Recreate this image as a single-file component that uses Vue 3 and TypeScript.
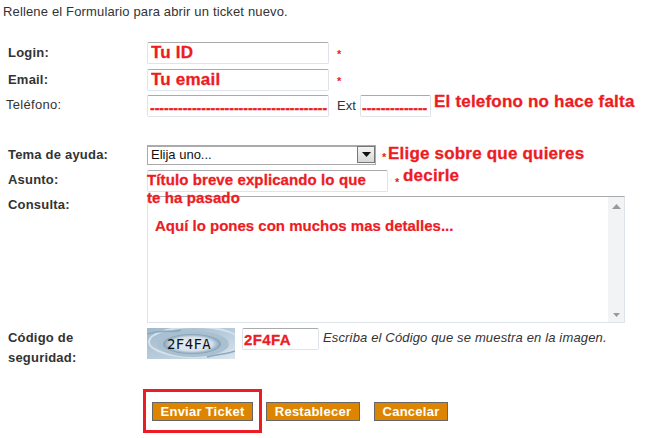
<script setup lang="ts">
const logins = [
  { label: 'Login:', value: 'Tu ID' },
  { label: 'Email:', value: 'Tu email' },
]
</script>

<template>
  <main class="page">
    <p class="intro">Rellene el Formulario para abrir un ticket nuevo.</p>

    <form class="form" @submit.prevent>
      <div v-for="row in logins" :key="row.label" class="row row-contact">
        <label class="label label-contact">{{ row.label }}</label>
        <input class="field field-main" :value="row.value" readonly />
        <span class="req req-far">*</span>
      </div>

      <div class="row row-phone">
        <label class="label label-plain">Teléfono:</label>
        <input class="field field-main field-dash" value="--------------------------------------" readonly />
        <span class="ext">Ext</span>
        <input class="field field-ext field-dash" value="--------------" readonly />
        <span class="note note-phone">El telefono no hace falta</span>
      </div>

      <div class="row row-topic">
        <label class="label">Tema de ayuda:</label>
        <div class="select">
          <span class="select-text">Elija uno...</span>
          <span class="select-btn">
            <svg width="9" height="5" viewBox="0 0 9 5"><path d="M0 0h9L4.500 5z" fill="#111" /></svg>
          </span>
        </div>
        <span class="req req-topic">*</span>
        <span class="note note-topic">Elige sobre que quieres</span>
      </div>

      <div class="row row-subject">
        <label class="label">Asunto:</label>
        <div class="field field-subject"></div>
        <span class="req req-subject">*</span>
        <span class="note note-decirle">decirle</span>
        <span class="note note-subject">Título breve explicando lo que<br />te ha pasado</span>
      </div>

      <div class="row row-message">
        <label class="label label-message">Consulta:</label>
        <div class="message">
          <div class="message-text">Aquí lo pones con muchos mas detalles...</div>
          <div class="scroll">
            <svg width="9" height="5" viewBox="0 0 9 5"><path d="M4.500 0L9 5H0z" fill="#9a9a9a" /></svg>
            <svg width="7" height="4" viewBox="0 0 7 4"><path d="M0 0h7L3.500 4z" fill="#9a9a9a" /></svg>
          </div>
        </div>
      </div>

      <div class="row row-captcha">
        <label class="label label-wrap">Código de seguridad:</label>
        <div class="captcha">
          <svg class="captcha-bg" width="88" height="31" viewBox="0 0 88 31">
            <defs>
              <linearGradient id="capbg" x1="0" y1="0" x2="1" y2="1">
                <stop offset="0" stop-color="#9fb9cc" />
                <stop offset="0.55" stop-color="#b9cddc" />
                <stop offset="1" stop-color="#dbe6ee" />
              </linearGradient>
              <radialGradient id="caprip" cx="0.5" cy="0.5" r="0.5">
                <stop offset="0" stop-color="#eef3f7" />
                <stop offset="0.7" stop-color="#d4e0e9" />
                <stop offset="1" stop-color="#7f9db4" />
              </radialGradient>
            </defs>
            <rect width="88" height="31" fill="url(#capbg)" />
            <ellipse cx="48" cy="14" rx="46" ry="15" fill="none" stroke="#d6e2ea" stroke-width="2" />
            <ellipse cx="46" cy="16" rx="36" ry="13" fill="#a9c0d1" />
            <ellipse cx="45" cy="16" rx="29" ry="10" fill="url(#caprip)" />
            <path d="M0 6C18 0 26 6 34 2M60 29c10-3 18-2 28-6" fill="none" stroke="#8ba7bc" stroke-width="1.500" />
          </svg>
          <span class="captcha-code">2F4FA</span>
        </div>
        <input class="field field-captcha" value="2F4FA" readonly />
        <em class="hint">Escriba el Código que se muestra en la imagen.</em>
      </div>

      <div class="actions">
        <div class="highlight">
          <button class="btn btn-send" type="submit">Enviar Ticket</button>
        </div>
        <button class="btn btn-reset" type="reset">Restablecer</button>
        <button class="btn btn-cancel" type="button">Cancelar</button>
      </div>
    </form>
  </main>
</template>

<style>
html, body { background: #fff; }
</style>

<style scoped>
.page {
  width: 647px;
  height: 438px;
  overflow: hidden;
  background: #fff;
  color: #333;
  font-family: "Liberation Sans", Arial, sans-serif;
  font-size: 13px;
  box-sizing: border-box;
  padding: 5px 0 0 3px;
}
.intro {
  margin: 0;
  line-height: 14px;
  letter-spacing: 0.15px;
}
.form {
  display: flex;
  flex-direction: column;
  margin-top: 23px;
  padding-left: 5px;
}
.row {
  position: relative;
  display: flex;
  align-items: flex-start;
}
.row-contact { height: 27px; }
.row-contact + .row-contact { height: 26px; }
.row-phone { height: 50px; }
.row-topic { height: 25px; }
.row-subject { height: 26px; }
.row-message { height: 132px; }
.row-captcha { height: 61px; }

.label {
  flex: 0 0 139px;
  font-weight: bold;
  line-height: 14px;
  letter-spacing: 0.2px;
  color: #333;
  padding-top: 3px;
}
.label-contact { padding-top: 4px; }
.label-plain {
  font-weight: normal;
  margin-left: -2px;
  flex-basis: 141px;
  letter-spacing: 0.3px;
  padding-top: 3px;
}
.label-message { padding-top: 2px; }
.label-wrap {
  line-height: 20px;
  padding-top: 0;
}
.row-captcha .label-wrap { width: 80px; flex: 0 0 80px; margin-right: 59px; }

.field {
  box-sizing: border-box;
  height: 22px;
  padding: 0 0 0 3px;
  border: 1px solid #dfe3ea;
  border-top-color: #aaa;
  border-radius: 2px;
  outline: none;
  background: #fff;
  color: #ed1c24;
  font-family: "Liberation Sans", Arial, sans-serif;
  font-weight: bold;
  font-size: 17px;
  letter-spacing: 0.2px;
  -webkit-text-stroke: 0.3px #ed1c24;
}
.field-main { width: 182px; }
.field-dash { font-size: 14px; letter-spacing: 0; padding: 4px 0 0 2px; }
.field-ext { width: 71px; padding-left: 1px; }
.field-subject { width: 241px; }
.field-captcha {
  width: 77px;
  margin-left: 7px;
  padding-left: 1px;
  font-size: 15px;
  letter-spacing: 0.4px;
}

.req {
  color: #ed1c24;
  font-size: 11px;
  font-weight: bold;
  line-height: 12px;
  margin: 4px 0 0 3px;
}
.req-far { margin: 6px 0 0 8px; }
.req-topic { margin: 6px 0 0 6px; }
.req-subject { margin: 6px 0 0 7px; }
.ext {
  margin: 4px 0 0 8px;
  width: 23px;
  line-height: 14px;
  color: #333;
}
.ext + .field { margin-left: 0; }

.note {
  position: absolute;
  z-index: 1;
  color: #ed1c24;
  font-weight: bold;
  font-size: 17px;
  line-height: 18px;
  letter-spacing: 0.2px;
  white-space: nowrap;
  -webkit-text-stroke: 0.3px #ed1c24;
}
.note-phone { left: 426px; top: -2px; }
.note-topic { left: 380px; top: 0; }
.note-decirle { left: 395px; top: -3px; }
.note-subject {
  left: 139px;
  top: 1px;
  font-size: 15px;
  line-height: 18px;
  letter-spacing: 0.1px;
}

.select {
  box-sizing: border-box;
  width: 229px;
  height: 20px;
  display: flex;
  justify-content: space-between;
  border: 1px solid #aaa;
  border-width: 2px 1px 1px;
  background: #fff;
  color: #111;
  line-height: 16px;
  padding-left: 3px;
}
.select-btn {
  box-sizing: border-box;
  width: 18px;
  height: 17px;
  margin-top: -1px;
  display: flex;
  align-items: center;
  justify-content: center;
  background: linear-gradient(#f4f4f4, #d8d8d8);
  border: 1px solid #777;
}

.message {
  box-sizing: border-box;
  width: 478px;
  height: 127px;
  display: flex;
  border: 1px solid #dfe3ea;
  border-top-color: #aaa;
  background: #fff;
}
.message-text {
  flex: 1;
  padding: 14px 0 0 7px;
  color: #ed1c24;
  font-weight: bold;
  font-size: 15px;
  line-height: 30px;
  -webkit-text-stroke: 0.2px #ed1c24;
}
.scroll {
  width: 16px;
  background: #f1f3f5;
  display: flex;
  flex-direction: column;
  align-items: center;
  justify-content: space-between;
  padding: 7px 0 5px;
}

.captcha {
  position: relative;
  width: 88px;
  height: 31px;
}
.captcha-bg { display: block; }
.captcha-code {
  position: absolute;
  left: 20px;
  top: 9px;
  color: #111;
  font-family: "DejaVu Sans Mono", monospace;
  font-size: 14px;
  line-height: 15px;
  letter-spacing: 0.4px;
}
.hint {
  margin: 3px 0 0 4px;
  line-height: 14px;
  letter-spacing: 0.15px;
  color: #333;
}

.actions {
  position: relative;
  display: flex;
  align-items: center;
  margin-left: 135px;
  height: 44px;
}
.highlight {
  box-sizing: border-box;
  width: 119px;
  height: 44px;
  display: flex;
  align-items: center;
  justify-content: center;
  border: 3px solid #ed1c24;
}
.btn {
  box-sizing: border-box;
  height: 19px;
  padding: 0;
  border: 1px solid #666;
  background: #dd8500;
  color: #fff;
  font-family: "Liberation Sans", Arial, sans-serif;
  font-weight: bold;
  font-size: 13px;
  letter-spacing: 0.25px;
}
.btn-send { width: 101px; }
.btn-reset { width: 94px; margin-left: 4px; }
.btn-cancel { width: 74px; margin-left: 14px; }
</style>
